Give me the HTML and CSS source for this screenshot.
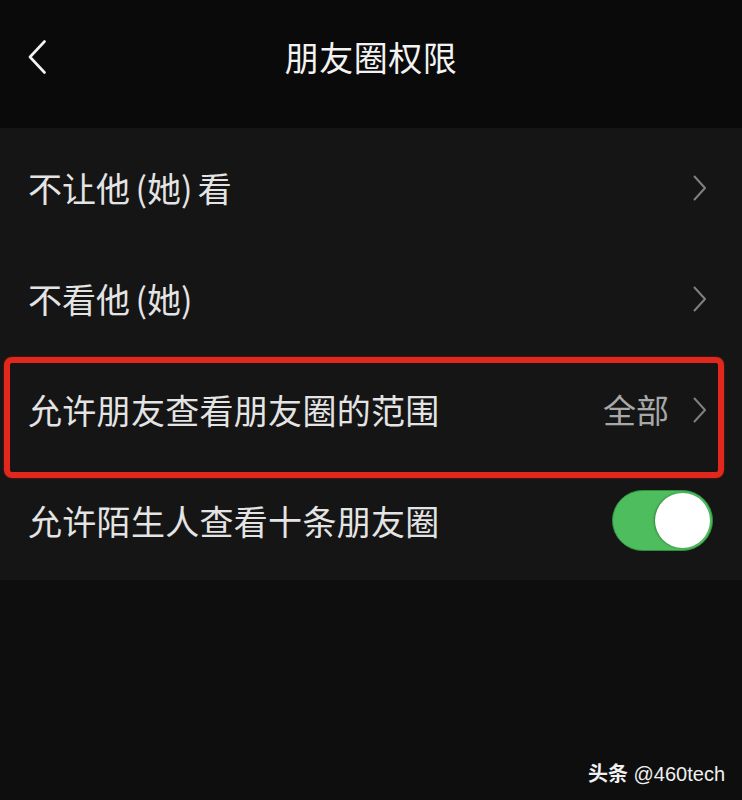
FILE: index.html
```html
<!DOCTYPE html>
<html lang="zh-CN">
<head>
<meta charset="utf-8">
<title>朋友圈权限</title>
<link rel="stylesheet" href="styles.css">
</head>
<body>
<div class="page">
  <header class="nav">
    <div class="nav-left">
      <svg class="back" width="20" height="34" viewBox="0 0 20 34"><path d="M17.5 1.5 L3 17 L17.5 32.5" fill="none" stroke="#f2f2f2" stroke-width="2.6" stroke-linecap="round" stroke-linejoin="round"/></svg>
    </div>
    <h1 class="title">朋友圈权限</h1>
    <div class="nav-right"></div>
  </header>
  <section class="list">
    <div class="row">
      <span class="label">不让他<span class="sp"> </span>(她)<span class="sp"> </span>看</span>
      <svg class="chev" width="14" height="26" viewBox="0 0 14 26"><path d="M1.5 1.5 L12 13 L1.5 24.5" fill="none" stroke="#808080" stroke-width="2" stroke-linecap="round" stroke-linejoin="round"/></svg>
    </div>
    <div class="row">
      <span class="label">不看他<span class="sp"> </span>(她)</span>
      <svg class="chev" width="14" height="26" viewBox="0 0 14 26"><path d="M1.5 1.5 L12 13 L1.5 24.5" fill="none" stroke="#808080" stroke-width="2" stroke-linecap="round" stroke-linejoin="round"/></svg>
    </div>
    <div class="row highlighted">
      <span class="label wide">允许朋友查看朋友圈的范围</span>
      <span class="value">全部</span>
      <svg class="chev" width="14" height="26" viewBox="0 0 14 26"><path d="M1.5 1.5 L12 13 L1.5 24.5" fill="none" stroke="#808080" stroke-width="2" stroke-linecap="round" stroke-linejoin="round"/></svg>
      <div class="mark"></div>
    </div>
    <div class="row">
      <span class="label wide">允许陌生人查看十条朋友圈</span>
      <div class="toggle"><div class="knob"></div></div>
    </div>
  </section>
  <div class="watermark"><b>头条</b> @460tech</div>
</div>
</body>
</html>
```

FILE: styles.css
```css
* { box-sizing: border-box; }
html, body {
  margin: 0;
  padding: 0;
  background: #0e0e0e;
}
body {
  font-family: "Noto Sans CJK SC", "Noto Sans", sans-serif;
  color: #e6e6e6;
}
.page {
  position: relative;
  width: 742px;
  height: 800px;
  overflow: hidden;
  background: #0e0e0e;
}
.nav {
  height: 128px;
  background: #0a0a0a;
  display: grid;
  grid-template-columns: 1fr auto 1fr;
  align-items: center;
  padding: 0 0 14px 0;
}
.nav-left {
  padding-left: 27px;
  display: flex;
  align-items: center;
}
.back { display: block; }
.title {
  margin: 0;
  font-size: 34px;
  font-weight: 400;
  color: #f2f2f2;
  line-height: 1;
  letter-spacing: 0.5px;
}
.list {
  background: #151515;
  padding: 4px 0;
}
.row {
  position: relative;
  height: 111px;
  display: flex;
  align-items: center;
  padding: 0 29px 0 28px;
}
.label {
  flex: 1;
  font-size: 34px;
  line-height: 1;
  color: #e4e4e4;
}
.label.wide { letter-spacing: 0.3px; }
.sp { font-size: 24px; }
.value {
  font-size: 33px;
  line-height: 1;
  color: #a8a8a8;
  margin-right: 24px;
}
.chev {
  display: block;
  margin-right: 6px;
}
.mark {
  position: absolute;
  left: 4px;
  right: 18px;
  top: 3px;
  bottom: -13px;
  border: 6px solid #e2271c;
  border-radius: 8px;
  box-shadow: 0 0 2px rgba(226, 39, 28, 0.6);
  pointer-events: none;
}
.toggle {
  position: relative;
  width: 101px;
  height: 61px;
  border-radius: 31px;
  background: #4dbd5d;
  border: 1px solid #2f8f3e;
}
.knob {
  position: absolute;
  right: 2px;
  top: 2px;
  width: 55px;
  height: 55px;
  border-radius: 50%;
  background: #ffffff;
  box-shadow: -1px 0 2px rgba(0, 0, 0, 0.3);
}
.watermark {
  position: absolute;
  right: 17px;
  bottom: 16px;
  font-family: "Liberation Sans", "Noto Sans CJK SC", sans-serif;
  font-size: 20px;
  line-height: 1;
  color: #f0f0f0;
}
.watermark b {
  font-family: "Noto Sans CJK SC", sans-serif;
  font-weight: 700;
}
```
